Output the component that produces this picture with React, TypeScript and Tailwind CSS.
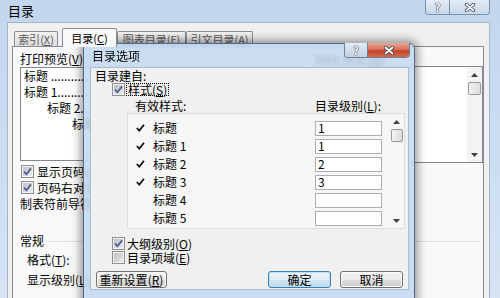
import type React from "react"

function Key({ k }: { k: string }) {
  return (
    <span>
      (<span className="underline underline-offset-1">{k}</span>)
    </span>
  )
}

function CheckBox({ checked = false }: { checked?: boolean }) {
  return (
    <span className="relative flex h-[13px] w-[13px] shrink-0 items-center justify-center border border-[#8e8f8f] bg-[#f4f4f4]">
      <span className="h-[9px] w-[9px] bg-gradient-to-br from-[#b9bec4] to-[#ececec]" />
      {checked && (
        <svg width="11" height="11" viewBox="0 0 11 11" className="absolute left-0 top-0">
          <path d="M2 5.6 L4.4 8.2 L9 2.4" fill="none" stroke="#4b5f8f" strokeWidth="1.8" />
        </svg>
      )}
    </span>
  )
}

function Tick() {
  return (
    <svg width="9" height="8" viewBox="0 0 9 8">
      <path d="M0.8 4 L3.3 6.6 L8 0.8" fill="none" stroke="#111" strokeWidth="1.7" />
    </svg>
  )
}

function XGlyph() {
  return (
    <svg width="12" height="9" viewBox="0 0 12 9">
      <path d="M2.5 1.5 L9.5 7.5 M9.5 1.5 L2.5 7.5" stroke="#3b4659" strokeWidth="3.4" strokeLinecap="round" />
      <path d="M2.5 1.5 L9.5 7.5 M9.5 1.5 L2.5 7.5" stroke="#fff" strokeWidth="1.7" strokeLinecap="round" />
    </svg>
  )
}

function Help() {
  return (
    <span className="text-[11px] font-bold leading-[12px] text-white [text-shadow:0_0_1px_#2d3a4e,0_0_1px_#2d3a4e,0_0_1px_#2d3a4e]">?</span>
  )
}

function Arrow({ up }: { up?: boolean }) {
  return (
    <svg width="7" height="4" viewBox="0 0 7 4">
      <path d={up ? "M0 4 L3.5 0 L7 4 Z" : "M0 0 L3.5 4 L7 0 Z"} fill="#3f3f3f" />
    </svg>
  )
}

function Btn({ children, className = "", primary = false }: { children: React.ReactNode; className?: string; primary?: boolean }) {
  return (
    <div
      className={`flex h-[17px] items-center justify-center rounded-[3px] border text-[12px] leading-none ${
        primary
          ? "border-[#3c7fb1] bg-[linear-gradient(#eef6fb_0%,#dfeef7_50%,#cfe4f0_51%,#c2dcec_100%)] shadow-[inset_0_0_0_1px_#b8e0f7]"
          : "border-[#707070] bg-[linear-gradient(#f4f4f4_0%,#ebebeb_50%,#dddddd_51%,#d0d0d0_100%)] shadow-[inset_0_0_0_1px_#fcfcfc]"
      } ${className}`}
    >
      {children}
    </div>
  )
}

function Tab({ children, selected = false, className = "" }: { children: React.ReactNode; selected?: boolean; className?: string }) {
  return (
    <div
      className={`flex items-center justify-center whitespace-nowrap rounded-t-[2px] border border-b-0 border-[#898c95] text-[11px] leading-[12px] ${
        selected
          ? "relative z-10 -mb-px h-[19px] bg-[#f9f9f9] text-black"
          : "h-[15px] bg-gradient-to-b from-[#f2f2f2] to-[#dcdcdc] text-[#5a5a5a]"
      } ${className}`}
    >
      {children}
    </div>
  )
}

const styles = [
  { name: "标题", level: "1" },
  { name: "标题 1", level: "1" },
  { name: "标题 2", level: "2" },
  { name: "标题 3", level: "3" },
  { name: "标题 4", level: "" },
  { name: "标题 5", level: "" },
]

export default function App() {
  return (
    <div className="relative h-[298px] w-[500px] overflow-hidden bg-gradient-to-b from-[#c2d6ee] to-[#d6e4f4] text-[12px] leading-[14px] text-black font-['Noto_Sans_CJK_SC','Noto_Sans',sans-serif]">
      {/* outer window title */}
      <div className="flex h-[22px] items-start justify-between">
        <span className="pl-[8px] pt-[4px] text-[13px]">目录</span>
        <div className="mr-[10px] flex h-[15px] overflow-hidden rounded-b-[4px] border border-t-0 border-[#7c8ea8]">
          <div className="flex w-[24px] items-center justify-center border-r border-[#7c8ea8] bg-gradient-to-b from-[#e3ecf7] to-[#c9d8ea]">
            <Help />
          </div>
          <div className="flex w-[39px] items-center justify-center bg-gradient-to-b from-[#e3ecf7] to-[#c9d8ea]">
            <XGlyph />
          </div>
        </div>
      </div>

      {/* outer window body */}
      <div className="ml-[7px] mr-[10px] h-[276px] overflow-hidden border border-b-0 border-[#a4b6cc] bg-[#f0f0f0] pl-[4px] pr-[5px] pt-[5px]">
        <div className="flex h-[18px] items-end pl-[2px]">
          <Tab className="w-[44px]">
            <span>索引<Key k="X" /></span>
          </Tab>
          <Tab selected className="ml-[4px] w-[55px]">
            <span>目录<Key k="C" /></span>
          </Tab>
          <Tab className="w-[69px]">
            <span>图表目录<Key k="F" /></span>
          </Tab>
          <Tab className="w-[67px]">
            <span>引文目录<Key k="A" /></span>
          </Tab>
        </div>

        <div className="h-[260px] border border-[#898c95] bg-[#f9f9f9]">
          <div className="flex">
            {/* left column */}
            <div className="w-[300px] shrink-0 pl-[7px] pt-[5px]">
              <div>
                打印预览<Key k="V" />
              </div>
              <div className="mt-[1px] h-[94px] w-[280px] overflow-hidden whitespace-nowrap border border-[#828790] bg-white text-[12px] leading-[16px]">
                <div className="pl-[3px]">标题 ........................................................</div>
                <div className="pl-[3px]">标题 1......................................................</div>
                <div className="pl-[26px]">标题 2..................................................</div>
                <div className="pl-[51px]">标题 3..............................................</div>
              </div>
              <div className="mt-[4px] flex h-[13px] items-center gap-[3px] pl-[1px]">
                <CheckBox checked />
                <span className="leading-[13px]">
                  显示页码<Key k="S" />
                </span>
              </div>
              <div className="mt-[3px] flex h-[13px] items-center gap-[3px] pl-[1px]">
                <CheckBox checked />
                <span className="leading-[13px]">
                  页码右对齐<Key k="R" />
                </span>
              </div>
              <div className="mt-[3px]">
                制表符前导符<Key k="B" />:
              </div>
            </div>
            {/* right column */}
            <div className="flex-1 pt-[5px]">
              <div className="pl-[2px]">
                Web 预览<Key k="W" />
              </div>
              <div className="flex h-[97px] border border-[#828790] bg-white">
                <div className="flex-1" />
                <div className="flex w-[15px] flex-col items-center bg-[#f3f3f3]">
                  <div className="flex h-[15px] items-center pt-[1px]">
                    <Arrow up />
                  </div>
                  <div className="h-[13px] w-[13px] rounded-[2px] border border-[#9a9a9a] bg-gradient-to-r from-[#f4f4f4] to-[#dcdcdc]" />
                  <div className="flex-1" />
                  <div className="flex h-[15px] items-center">
                    <Arrow />
                  </div>
                </div>
              </div>
            </div>
          </div>

          {/* 常规 group */}
          <div className="mt-[23px] flex items-center pl-[7px] pr-[3px]">
            <span>常规</span>
            <div className="ml-[4px] h-px flex-1 bg-[#d5dfe5]" />
          </div>
          <div className="mt-[5px] pl-[14px]">
            格式<Key k="T" />:
          </div>
          <div className="mt-[6px] pl-[14px]">
            显示级别<Key k="L" />:
          </div>
        </div>
      </div>

      {/* 目录选项 dialog, lying over the main window */}
      <div className="absolute left-[83px] top-[43px] flex h-[262px] w-[332px] flex-col rounded-t-[6px] border border-[#53688a] bg-[#c3d8f0]/85 shadow-[0_0_9px_3px_rgba(0,0,0,0.38)] backdrop-blur-[1.5px]">
        <div className="flex h-[23px] shrink-0 items-start justify-between">
          <span className="pl-[8px] pt-[5px]">目录选项</span>
          <div className="-mt-px mr-[4px] flex h-[15px] overflow-hidden rounded-b-[4px] border border-t-0 border-[#6e7f99]">
            <div className="flex w-[23px] items-center justify-center border-r border-[#6e7f99] bg-gradient-to-b from-[#e2eaf4] to-[#c2d0e2]">
              <Help />
            </div>
            <div className="flex w-[41px] items-center justify-center bg-[linear-gradient(#e9a596_0%,#d9735d_45%,#c5432a_55%,#d5694c_100%)]">
              <XGlyph />
            </div>
          </div>
        </div>

        <div className="ml-[6px] mr-[5px] h-[223px] shrink-0 border border-[#a9bcd4] bg-[#f0f0f0]">
          <div className="mt-[1px] pl-[4px] leading-[13px]">目录建自:</div>
          <div className="mt-px flex h-[13px] items-center pl-[21px]">
            <CheckBox checked />
            <span className="ml-[1px] border border-dotted border-black px-[1px] leading-[11px]">
              样式<Key k="S" />
            </span>
          </div>
          <div className="mt-[3px] flex pl-[44px] leading-[13px]">
            <span className="w-[180px]">有效样式:</span>
            <span>
              目录级别<Key k="L" />:
            </span>
          </div>

          {/* style list */}
          <div className="ml-[36px] mt-[1px] flex h-[116px] w-[278px] border border-[#dedede] bg-[#f6f6f6]">
            <div className="flex-1 pt-[5px]">
              {styles.map((s) => (
                <div key={s.name} className="flex h-[18px] items-center">
                  <span className="flex w-[25px] justify-start pl-[8px]">{s.level ? <Tick /> : null}</span>
                  <span className="w-[162px]">{s.name}</span>
                  <span className="flex h-[15px] w-[67px] items-center border border-[#abadb3] bg-white pl-[2px]">{s.level}</span>
                </div>
              ))}
            </div>
            <div className="mr-[1px] flex w-[13px] flex-col items-center">
              <div className="flex h-[15px] items-center pt-[1px]">
                <Arrow up />
              </div>
              <div className="h-[13px] w-[12px] rounded-[2px] border border-[#979797] bg-gradient-to-r from-[#f4f4f4] to-[#dadada]" />
              <div className="flex-1" />
              <div className="flex h-[15px] items-center">
                <Arrow />
              </div>
            </div>
          </div>

          <div className="mt-[8px] flex h-[13px] items-center gap-[2px] pl-[21px]">
            <CheckBox checked />
            <span className="leading-[13px]">
              大纲级别<Key k="O" />
            </span>
          </div>
          <div className="mt-[1px] flex h-[13px] items-center gap-[2px] pl-[21px]">
            <CheckBox />
            <span className="leading-[13px]">
              目录项域<Key k="E" />
            </span>
          </div>

          <div className="mt-[7px] flex items-center px-[5px]">
            <Btn className="w-[71px]">
              <span>
                重新设置<Key k="R" />
              </span>
            </Btn>
            <div className="flex-1" />
            <Btn primary className="w-[63px]">
              确定
            </Btn>
            <Btn className="ml-[9px] w-[63px]">取消</Btn>
          </div>
        </div>
      </div>
    </div>
  )
}
